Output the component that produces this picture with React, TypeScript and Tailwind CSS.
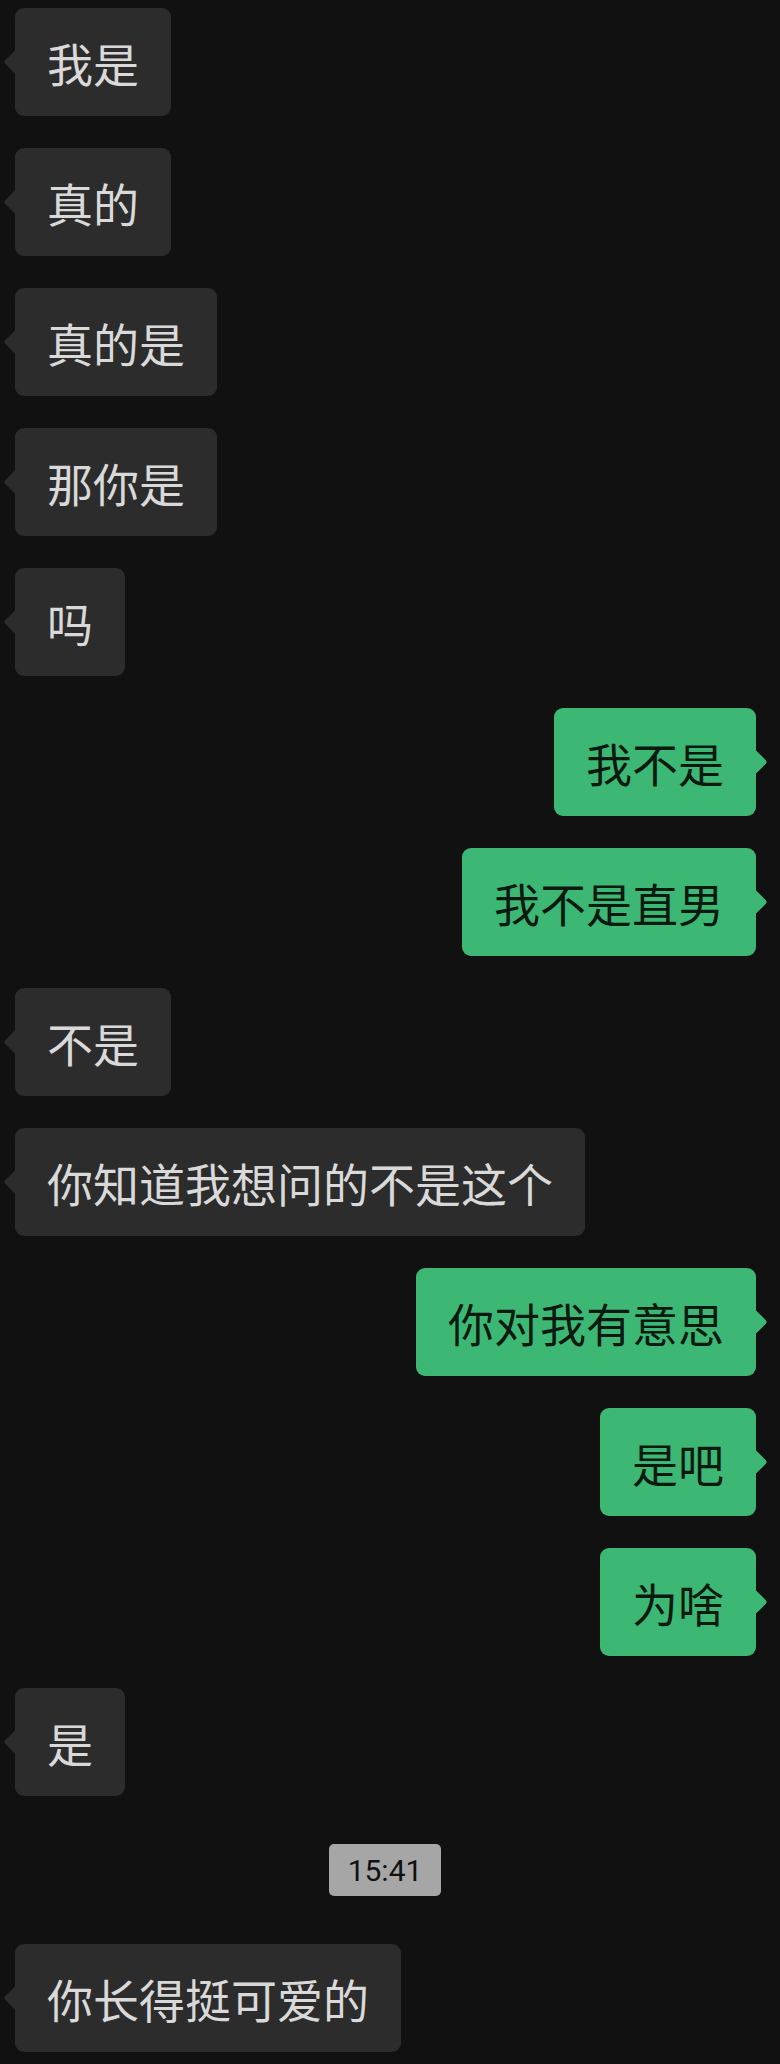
import React from "react";

type Msg = { text: string; me?: boolean; time?: boolean };

const messages: Msg[] = [
    { text: "我是" },
    { text: "真的" },
    { text: "真的是" },
    { text: "那你是" },
    { text: "吗" },
    { text: "我不是", me: true },
    { text: "我不是直男", me: true },
    { text: "不是" },
    { text: "你知道我想问的不是这个" },
    { text: "你对我有意思", me: true },
    { text: "是吧", me: true },
    { text: "为啥", me: true },
    { text: "是" },
    { text: "15:41", time: true },
    { text: "你长得挺可爱的" },
];

function Bubble({ text, me }: { text: string; me?: boolean }) {
    return (
        <div className={me ? "flex justify-end pr-[24px]" : "flex justify-start pl-[15px]"}>
            <div
                className={
                    "relative h-[108px] px-8 flex items-center rounded-[9px] text-[46px] leading-none " +
                    (me ? "bg-[#3db874] text-[#0b1a10]" : "bg-[#2c2c2c] text-[#d9d9d9]")
                }
            >
                <span
                    className={
                        "absolute top-1/2 w-[18px] h-[18px] -translate-y-1/2 rotate-45 rounded-[3px] " +
                        (me ? "-right-[8px] bg-[#3db874]" : "-left-[8px] bg-[#2c2c2c]")
                    }
                />
                <span className="relative">{text}</span>
            </div>
        </div>
    );
}

export default function App() {
    return (
        <div
            className="w-[780px] min-h-[2064px] bg-[#111111] pt-[8px] pb-[11px] flex flex-col gap-8"
            style={{ fontFamily: '"Noto Sans CJK SC", "Noto Sans", sans-serif' }}
        >
            {messages.map((m, i) =>
                m.time ? (
                    <div key={i} className="flex justify-center pr-[10px] my-4">
                        <div
                            className="w-[112px] h-[52px] rounded-[5px] bg-[#a6a6a6] text-[#111111] text-[30px] flex items-center justify-center"
                            style={{ fontFamily: "Roboto, sans-serif" }}
                        >
                            {m.text}
                        </div>
                    </div>
                ) : (
                    <Bubble key={i} text={m.text} me={m.me} />
                )
            )}
        </div>
    );
}
